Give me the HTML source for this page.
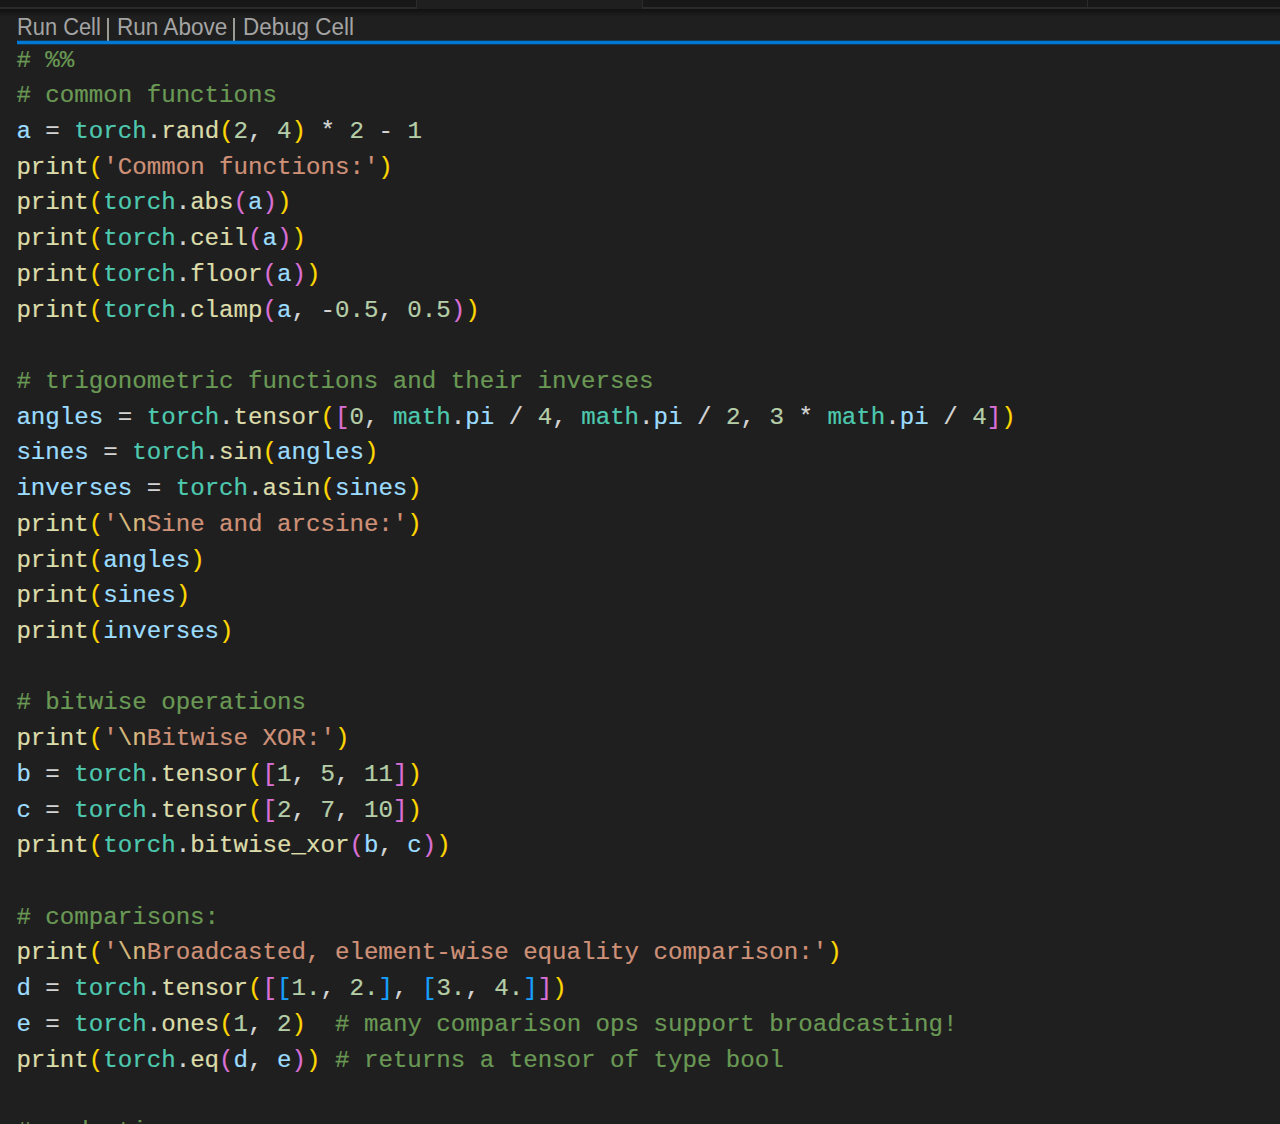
<!DOCTYPE html>
<html><head><meta charset="utf-8">
<style>
html,body{margin:0;padding:0;}
body{width:1280px;height:1124px;overflow:hidden;background:#1f1f1f;position:relative;}
.tabs{position:absolute;left:0;top:0;width:1280px;height:9px;background:#181818;}
.tab{position:absolute;top:0;height:7px;background:#181818;border-bottom:2px solid #2b2b2b;}
.shadow{position:absolute;left:0;top:9px;width:1280px;height:8px;background:linear-gradient(#111111,#1f1f1f);}
.lens{position:absolute;top:7px;transform-origin:0 0;font-family:"Liberation Sans",sans-serif;font-size:23px;color:#a4a4a4;white-space:pre;line-height:40px;height:40px;}
.sep{position:absolute;top:18px;width:2px;height:23px;background:#9c9c94;}
.bar{position:absolute;left:17px;top:41px;width:1263px;height:3px;background:#0078d4;box-shadow:0 1px 0 rgba(0,120,212,0.3),0 -1px 0 rgba(0,120,212,0.3);}
.ln{position:absolute;left:16.4px;-webkit-text-stroke:0.2px currentColor;font-family:"Liberation Mono",monospace;font-size:24.14px;line-height:35.714px;height:35.714px;white-space:pre;color:#d4d4d4;}
.c{color:#6a9955}.f{color:#dcdcaa}.t{color:#4ec9b0}.v{color:#9cdcfe}.s{color:#ce9178}.e{color:#d7ba7d}.n{color:#b5cea8}.o{color:#d4d4d4}
.b1{color:#ffd700}.b2{color:#da70d6}.b3{color:#179fff}
</style></head><body>
<div class="tabs">
<div class="tab" style="left:0;width:416px;border-right:1px solid #2b2b2b"></div>
<div class="tab" style="left:417px;width:225px;height:9px;border-bottom:none;background:#1f1f1f"></div>
<div class="tab" style="left:642px;width:444px;border-left:1px solid #2b2b2b;border-right:1px solid #2b2b2b"></div>
<div class="tab" style="left:1088px;width:192px"></div>
</div>
<div class="shadow"></div>
<div class="lens" style="left:17px;transform:scaleX(0.95)">Run Cell</div>
<div class="sep" style="left:107px"></div>
<div class="lens" style="left:117px;transform:scaleX(0.98)">Run Above</div>
<div class="sep" style="left:233px"></div>
<div class="lens" style="left:243px;transform:scaleX(0.975)">Debug Cell</div>
<div class="bar"></div>
<div class="ln" style="top:42.59px"><span class="c"># %%</span></div>
<div class="ln" style="top:78.30px"><span class="c"># common functions</span></div>
<div class="ln" style="top:114.02px"><span class="v">a</span> <span class="o">=</span> <span class="t">torch</span><span class="o">.</span><span class="f">rand</span><span class="b1">(</span><span class="n">2</span><span class="o">,</span> <span class="n">4</span><span class="b1">)</span> <span class="o">*</span> <span class="n">2</span> <span class="o">-</span> <span class="n">1</span></div>
<div class="ln" style="top:149.73px"><span class="f">print</span><span class="b1">(</span><span class="s">&#x27;</span><span class="s">Common functions:</span><span class="s">&#x27;</span><span class="b1">)</span></div>
<div class="ln" style="top:185.45px"><span class="f">print</span><span class="b1">(</span><span class="t">torch</span><span class="o">.</span><span class="f">abs</span><span class="b2">(</span><span class="v">a</span><span class="b2">)</span><span class="b1">)</span></div>
<div class="ln" style="top:221.16px"><span class="f">print</span><span class="b1">(</span><span class="t">torch</span><span class="o">.</span><span class="f">ceil</span><span class="b2">(</span><span class="v">a</span><span class="b2">)</span><span class="b1">)</span></div>
<div class="ln" style="top:256.87px"><span class="f">print</span><span class="b1">(</span><span class="t">torch</span><span class="o">.</span><span class="f">floor</span><span class="b2">(</span><span class="v">a</span><span class="b2">)</span><span class="b1">)</span></div>
<div class="ln" style="top:292.59px"><span class="f">print</span><span class="b1">(</span><span class="t">torch</span><span class="o">.</span><span class="f">clamp</span><span class="b2">(</span><span class="v">a</span><span class="o">,</span> <span class="o">-</span><span class="n">0.5</span><span class="o">,</span> <span class="n">0.5</span><span class="b2">)</span><span class="b1">)</span></div>
<div class="ln" style="top:364.02px"><span class="c"># trigonometric functions and their inverses</span></div>
<div class="ln" style="top:399.73px"><span class="v">angles</span> <span class="o">=</span> <span class="t">torch</span><span class="o">.</span><span class="f">tensor</span><span class="b1">(</span><span class="b2">[</span><span class="n">0</span><span class="o">,</span> <span class="t">math</span><span class="o">.</span><span class="v">pi</span> <span class="o">/</span> <span class="n">4</span><span class="o">,</span> <span class="t">math</span><span class="o">.</span><span class="v">pi</span> <span class="o">/</span> <span class="n">2</span><span class="o">,</span> <span class="n">3</span> <span class="o">*</span> <span class="t">math</span><span class="o">.</span><span class="v">pi</span> <span class="o">/</span> <span class="n">4</span><span class="b2">]</span><span class="b1">)</span></div>
<div class="ln" style="top:435.44px"><span class="v">sines</span> <span class="o">=</span> <span class="t">torch</span><span class="o">.</span><span class="f">sin</span><span class="b1">(</span><span class="v">angles</span><span class="b1">)</span></div>
<div class="ln" style="top:471.16px"><span class="v">inverses</span> <span class="o">=</span> <span class="t">torch</span><span class="o">.</span><span class="f">asin</span><span class="b1">(</span><span class="v">sines</span><span class="b1">)</span></div>
<div class="ln" style="top:506.87px"><span class="f">print</span><span class="b1">(</span><span class="s">&#x27;</span><span class="e">\n</span><span class="s">Sine and arcsine:</span><span class="s">&#x27;</span><span class="b1">)</span></div>
<div class="ln" style="top:542.59px"><span class="f">print</span><span class="b1">(</span><span class="v">angles</span><span class="b1">)</span></div>
<div class="ln" style="top:578.30px"><span class="f">print</span><span class="b1">(</span><span class="v">sines</span><span class="b1">)</span></div>
<div class="ln" style="top:614.01px"><span class="f">print</span><span class="b1">(</span><span class="v">inverses</span><span class="b1">)</span></div>
<div class="ln" style="top:685.44px"><span class="c"># bitwise operations</span></div>
<div class="ln" style="top:721.16px"><span class="f">print</span><span class="b1">(</span><span class="s">&#x27;</span><span class="e">\n</span><span class="s">Bitwise XOR:</span><span class="s">&#x27;</span><span class="b1">)</span></div>
<div class="ln" style="top:756.87px"><span class="v">b</span> <span class="o">=</span> <span class="t">torch</span><span class="o">.</span><span class="f">tensor</span><span class="b1">(</span><span class="b2">[</span><span class="n">1</span><span class="o">,</span> <span class="n">5</span><span class="o">,</span> <span class="n">11</span><span class="b2">]</span><span class="b1">)</span></div>
<div class="ln" style="top:792.58px"><span class="v">c</span> <span class="o">=</span> <span class="t">torch</span><span class="o">.</span><span class="f">tensor</span><span class="b1">(</span><span class="b2">[</span><span class="n">2</span><span class="o">,</span> <span class="n">7</span><span class="o">,</span> <span class="n">10</span><span class="b2">]</span><span class="b1">)</span></div>
<div class="ln" style="top:828.30px"><span class="f">print</span><span class="b1">(</span><span class="t">torch</span><span class="o">.</span><span class="f">bitwise_xor</span><span class="b2">(</span><span class="v">b</span><span class="o">,</span> <span class="v">c</span><span class="b2">)</span><span class="b1">)</span></div>
<div class="ln" style="top:899.73px"><span class="c"># comparisons:</span></div>
<div class="ln" style="top:935.44px"><span class="f">print</span><span class="b1">(</span><span class="s">&#x27;</span><span class="e">\n</span><span class="s">Broadcasted, element-wise equality comparison:</span><span class="s">&#x27;</span><span class="b1">)</span></div>
<div class="ln" style="top:971.15px"><span class="v">d</span> <span class="o">=</span> <span class="t">torch</span><span class="o">.</span><span class="f">tensor</span><span class="b1">(</span><span class="b2">[</span><span class="b3">[</span><span class="n">1.</span><span class="o">,</span> <span class="n">2.</span><span class="b3">]</span><span class="o">,</span> <span class="b3">[</span><span class="n">3.</span><span class="o">,</span> <span class="n">4.</span><span class="b3">]</span><span class="b2">]</span><span class="b1">)</span></div>
<div class="ln" style="top:1006.87px"><span class="v">e</span> <span class="o">=</span> <span class="t">torch</span><span class="o">.</span><span class="f">ones</span><span class="b1">(</span><span class="n">1</span><span class="o">,</span> <span class="n">2</span><span class="b1">)</span>  <span class="c"># many comparison ops support broadcasting!</span></div>
<div class="ln" style="top:1042.58px"><span class="f">print</span><span class="b1">(</span><span class="t">torch</span><span class="o">.</span><span class="f">eq</span><span class="b2">(</span><span class="v">d</span><span class="o">,</span> <span class="v">e</span><span class="b2">)</span><span class="b1">)</span> <span class="c"># returns a tensor of type bool</span></div>
<div class="ln" style="top:1114.01px"><span class="c"># reductions:</span></div>
</body></html>
